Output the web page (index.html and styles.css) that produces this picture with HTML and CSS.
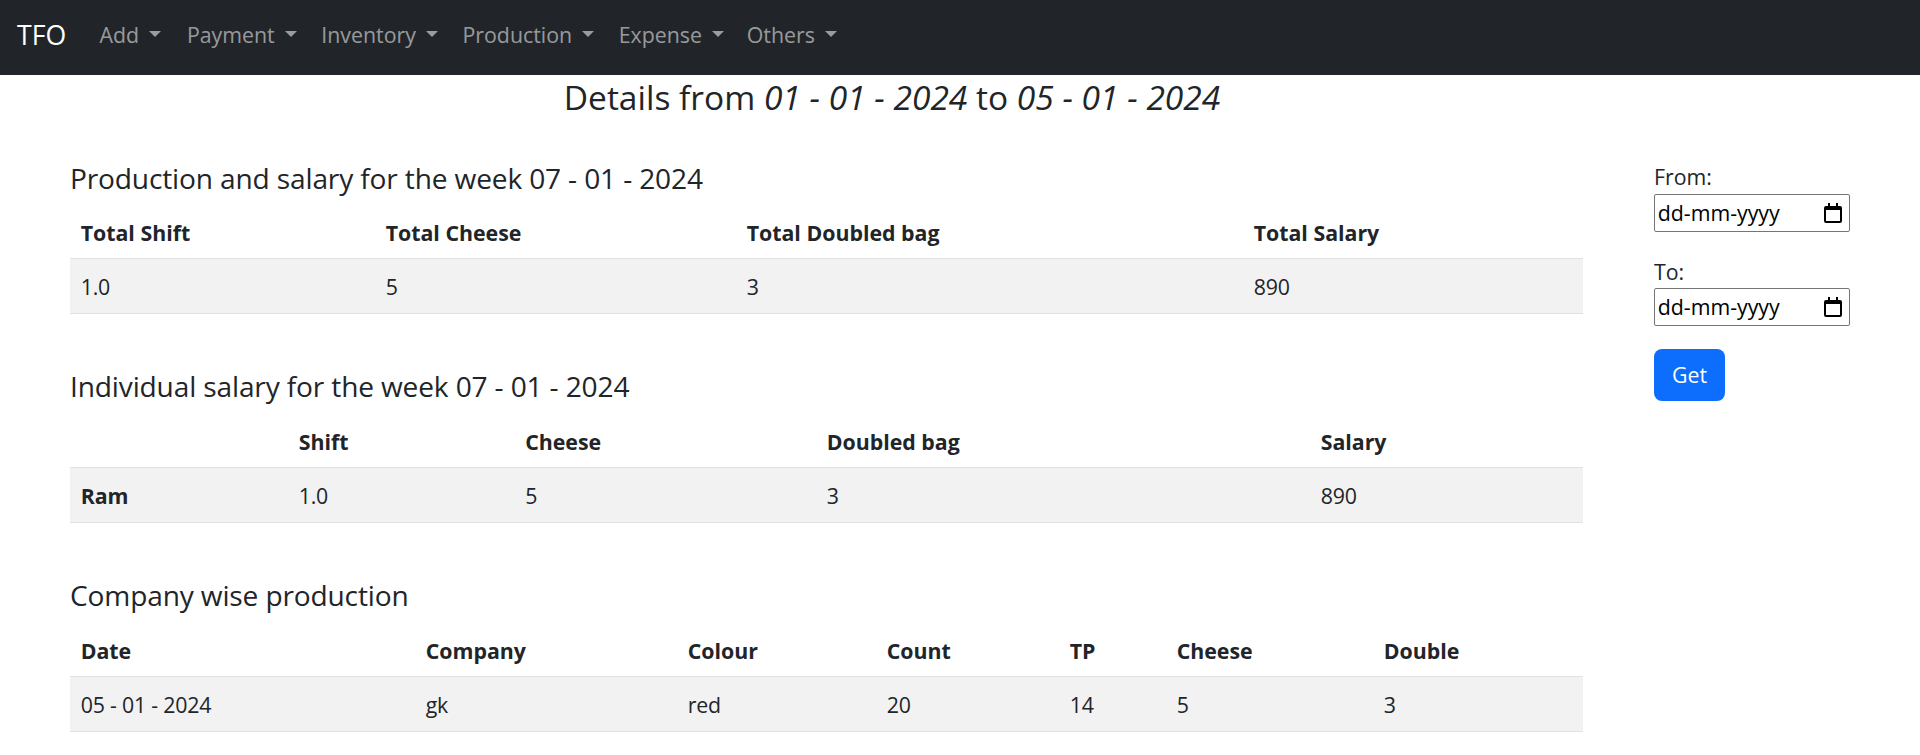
FILE: index.html
```html
<!DOCTYPE html>
<html lang="en">
<head>
<meta charset="utf-8">
<title>TFO</title>
<link rel="stylesheet" href="styles.css">
</head>
<body>
<nav class="navbar">
  <a class="brand" href="#">TFO</a>
  <ul class="nav">
    <li><a class="nav-link caret" href="#">Add</a></li>
    <li><a class="nav-link caret" href="#">Payment</a></li>
    <li><a class="nav-link caret" href="#">Inventory</a></li>
    <li><a class="nav-link caret" href="#">Production</a></li>
    <li><a class="nav-link caret" href="#">Expense</a></li>
    <li><a class="nav-link caret" href="#">Others</a></li>
  </ul>
</nav>

<h3 class="title">Details from <i>01 - 01 - 2024</i> to <i>05 - 01 - 2024</i></h3>

<div class="content">
  <div class="main-col">
    <section class="section">
      <h4 class="section-title">Production and salary for the week 07 - 01 - 2024</h4>
      <table class="table t1">
        <thead>
          <tr><th>Total Shift</th><th>Total Cheese</th><th>Total Doubled bag</th><th>Total Salary</th></tr>
        </thead>
        <tbody>
          <tr><td>1.0</td><td>5</td><td>3</td><td>890</td></tr>
        </tbody>
      </table>
    </section>

    <section class="section">
      <h4 class="section-title">Individual salary for the week 07 - 01 - 2024</h4>
      <table class="table t2">
        <thead>
          <tr><th></th><th>Shift</th><th>Cheese</th><th>Doubled bag</th><th>Salary</th></tr>
        </thead>
        <tbody>
          <tr><th>Ram</th><td>1.0</td><td>5</td><td>3</td><td>890</td></tr>
        </tbody>
      </table>
    </section>

    <section class="section">
      <h4 class="section-title">Company wise production</h4>
      <table class="table t3">
        <thead>
          <tr><th>Date</th><th>Company</th><th>Colour</th><th>Count</th><th>TP</th><th>Cheese</th><th>Double</th></tr>
        </thead>
        <tbody>
          <tr><td>05 - 01 - 2024</td><td>gk</td><td>red</td><td>20</td><td>14</td><td>5</td><td>3</td></tr>
        </tbody>
      </table>
    </section>
  </div>

  <aside class="side-col">
    <form class="date-form">
      <label class="field-label">From:</label>
      <div class="date-field">
        <span class="date-text">dd-mm-yyyy</span>
        <svg class="cal-icon" width="18" height="20" viewBox="0 0 18 20"><path fill="#000" fill-rule="evenodd" d="M4 0h2v3h6V0h2v3h2a2 2 0 0 1 2 2v13a2 2 0 0 1-2 2H2a2 2 0 0 1-2-2V5a2 2 0 0 1 2-2h2z M2 7v11h14V7z"/></svg>
      </div>
      <label class="field-label second">To:</label>
      <div class="date-field tight">
        <span class="date-text">dd-mm-yyyy</span>
        <svg class="cal-icon" width="18" height="20" viewBox="0 0 18 20"><path fill="#000" fill-rule="evenodd" d="M4 0h2v3h6V0h2v3h2a2 2 0 0 1 2 2v13a2 2 0 0 1-2 2H2a2 2 0 0 1-2-2V5a2 2 0 0 1 2-2h2z M2 7v11h14V7z"/></svg>
      </div>
      <button type="button" class="btn">Get</button>
    </form>
  </aside>
</div>
</body>
</html>
```

FILE: styles.css
```css
* { box-sizing: border-box; }

html, body {
  margin: 0;
  padding: 0;
  background: #fff;
}

body {
  font-family: "Open Sans", "Noto Sans", "Liberation Sans", sans-serif;
  font-size: 21.33px;
  line-height: 32px;
  color: #212529;
}

/* Navbar */
.navbar {
  height: 75px;
  background: #212529;
  display: flex;
  align-items: center;
  padding: 0 16px 6px 16px;
}

.brand {
  color: #fff;
  text-decoration: none;
  font-size: 26.67px;
  line-height: 40px;
  margin-right: 21.33px;
  padding-left: 1px;
}

.nav {
  list-style: none;
  margin: 0;
  padding: 0;
  display: flex;
}

.nav-link {
  display: block;
  color: rgba(255, 255, 255, 0.55);
  text-decoration: none;
  font-size: 21.33px;
  line-height: 32px;
  padding: 0 12.3px;
}

.nav li:first-child .nav-link { padding-left: 12px; padding-right: 13.5px; }
.nav li:nth-child(5) .nav-link { padding-right: 10.5px; }

.caret::after {
  content: "";
  display: inline-block;
  margin-left: 10px;
  vertical-align: 0.255em;
  border-top: 0.3em solid;
  border-right: 0.3em solid transparent;
  border-left: 0.3em solid transparent;
  border-bottom: 0;
}

/* Title */
.title {
  margin: 0;
  font-size: 33.5px;
  line-height: 44px;
  font-weight: 500;
  text-align: center;
  padding-right: 136px;
  height: 41px;
}

/* Content */
.content {
  display: flex;
  align-items: flex-start;
}

.main-col {
  flex: none;
  width: 1583px;
  padding-left: 70px;
  padding-top: 42.5px;
}

.section-title {
  margin: 0 0 7px 0;
  font-size: 28.1px;
  line-height: 38.4px;
  font-weight: 500;
  letter-spacing: -0.15px;
}

.table {
  width: 1513px;
  border-collapse: collapse;
  table-layout: fixed;
  margin-bottom: 53px;
}

.table th,
.table td {
  text-align: left;
  padding: 12px 10.67px 10px;
  line-height: 32px;
  height: 55px;
  border-bottom: 1px solid #dee2e6;
  vertical-align: top;
}

.table thead th {
  padding-top: 13.5px;
  padding-bottom: 8.5px;
}

.table td { letter-spacing: -0.2px; }

.table th { font-weight: 700; }

.table tbody tr { background: #f2f2f2; }

.t1 th:nth-child(1) { width: 305px; }
.t1 th:nth-child(2) { width: 361px; }
.t1 th:nth-child(3) { width: 507px; }
.t1 th:nth-child(4) { width: 340px; }

.t2 th:nth-child(1) { width: 218px; }
.t2 th:nth-child(2) { width: 226.5px; }
.t2 th:nth-child(3) { width: 301.5px; }
.t2 th:nth-child(4) { width: 494px; }
.t2 th:nth-child(5) { width: 273px; }

.t3 th:nth-child(1) { width: 345px; }
.t3 th:nth-child(2) { width: 262px; }
.t3 th:nth-child(3) { width: 199px; }
.t3 th:nth-child(4) { width: 183px; }
.t3 th:nth-child(5) { width: 107px; }
.t3 th:nth-child(6) { width: 207px; }
.t3 th:nth-child(7) { width: 210px; }

/* Side column */
.side-col {
  margin-left: 71px;
  padding-top: 44.7px;
}

.date-form {
  display: flex;
  flex-direction: column;
  align-items: flex-start;
}

.field-label {
  display: block;
  line-height: 32px;
}

.field-label.second { margin-top: 24px; }

.date-field {
  margin-top: 1.6px;
  width: 196.4px;
  height: 37.4px;
  border: 1px solid #767676;
  border-radius: 2px;
  display: flex;
  align-items: center;
  justify-content: space-between;
  padding: 0 7px 0 2.7px;
  color: #000;
}

.date-field.tight { margin-top: 0.6px; }

.date-text {
  line-height: 32px;
}

.cal-icon {
  display: block;
  flex: none;
}

.btn {
  margin-top: 23.3px;
  width: 71px;
  height: 51.7px;
  padding: 0;
  border: 0;
  border-radius: 8px;
  background: #0d6efd;
  color: #fff;
  font-family: inherit;
  font-size: 21.33px;
  line-height: 32px;
  cursor: pointer;
}
```
